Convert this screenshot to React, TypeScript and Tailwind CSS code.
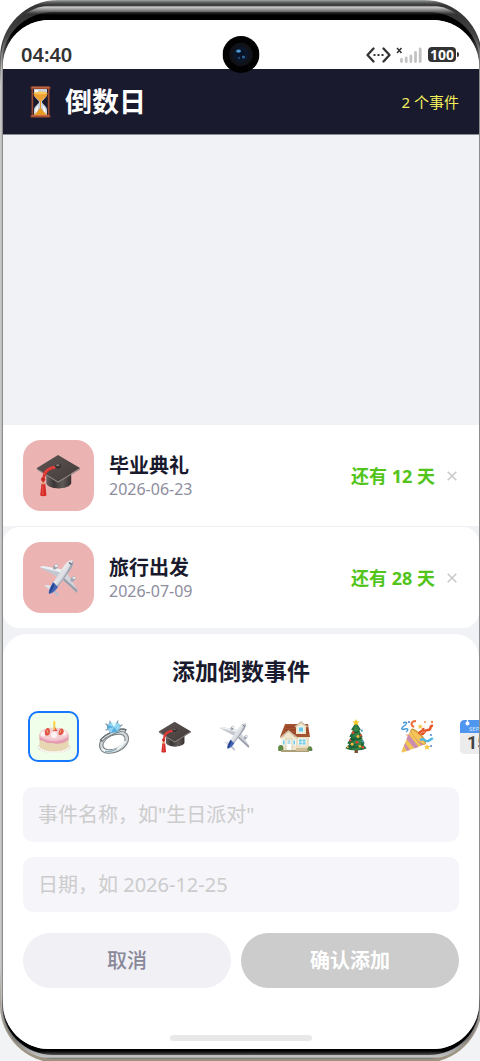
import { useState } from "react";
import type { ReactNode } from "react";

function CapIcon({ className }: { className: string }) {
  return (
    <svg viewBox="0 0 46 44" className={className} aria-hidden="true">
      <defs>
        <linearGradient id="capBase" x1="0" x2="1">
          <stop offset="0" stopColor="#6a6462" />
          <stop offset="0.3" stopColor="#3a3635" />
          <stop offset="0.65" stopColor="#5f5957" />
          <stop offset="1" stopColor="#37302f" />
        </linearGradient>
        <linearGradient id="capTop" x1="0" y1="0" x2="1" y2="1">
          <stop offset="0" stopColor="#5d5553" />
          <stop offset="1" stopColor="#423b3a" />
        </linearGradient>
      </defs>
      <path d="M10.500 17v13c2 7 23 7 25.500 0V17z" fill="url(#capBase)" />
      <path d="M1 14.500 22.500 28 45 14.500v1.300L22.500 29.500 1 16z" fill="#8d8583" />
      <path d="M22.500 1 45 14.300 22.500 28 .5 14.500z" fill="url(#capTop)" />
      <path d="M19 12.500C12 14 7.500 17 7.500 23.500v6M20 14c-7 1.500-11 4-11.500 10" fill="none" stroke="#d9322f" strokeWidth="1.700" />
      <path d="M19 13.200C13 14.500 9 17 8 22" fill="none" stroke="#f08a80" strokeWidth=".6" strokeDasharray="1.500 1" />
      <ellipse cx="22.600" cy="12.300" rx="2.800" ry="2.400" fill="#2d2827" />
      <ellipse cx="22.300" cy="11.500" rx="1.800" ry="1.200" fill="#77706e" />
      <circle cx="7.300" cy="26" r="2.200" fill="#c92722" />
      <path d="M5.500 29h4v2h-4z" fill="#e0a070" />
      <path d="M5.500 31h4l1.200 11.500c-2 1-4.500 1-6.400 0z" fill="#d62b28" />
      <path d="M7 32v10" stroke="#f3645c" strokeWidth=".8" />
    </svg>
  );
}

function PlaneIcon({ className }: { className: string }) {
  return (
    <svg viewBox="0 0 42 40" className={className} aria-hidden="true">
      <defs>
        <linearGradient id="planeBody" x1="0" y1="0" x2="1" y2="1">
          <stop offset="0.3" stopColor="#ffffff" />
          <stop offset="0.55" stopColor="#d3d6dc" />
          <stop offset="0.8" stopColor="#858a96" />
        </linearGradient>
      </defs>
      <path d="M1 9 5 8l20 3.500-5.500 7.500z" fill="#c3c7cf" />
      <path d="M1 9 5 8l20 3.500-2 3z" fill="#eff0f3" />
      <path d="m29 15 10.500 17-.500 3-14-13z" fill="#d2d5dc" />
      <path d="M39.500 32 39 35 25 22l1-2z" fill="#9a9fab" />
      <ellipse cx="17.500" cy="8.800" rx="3.200" ry="2" transform="rotate(-52 17.500 8.800)" fill="#a0a5b0" />
      <ellipse cx="18.300" cy="7.700" rx="1.600" ry="1.200" fill="#eef0f3" />
      <ellipse cx="35" cy="21" rx="3.200" ry="2" transform="rotate(-52 35 21)" fill="#a4a9b5" />
      <ellipse cx="36" cy="19.800" rx="1.500" ry="1.100" fill="#eceef2" />
      <path d="M6 27h4l7 2-4 4z" fill="#dfe2e7" />
      <path d="m16 31 5 5.500-.500 2.500-7-7z" fill="#b9becb" />
      <path d="M34 2c2.300 1 .6 6-1 9L19 30c-2 3-5 5-7 6-2-1-1-4 1-8L26 8c2-3 5-6 8-6z" fill="url(#planeBody)" />
      <path d="M35 3c1 2-.5 5.500-2 8L19 30c-1.500 2.500-3.500 4-5 5l-.5-1c7-7 14-17 18-25 1.500-3 2.500-5 3.500-6z" fill="#a0a5b0" />
      <path d="m15 24 5 5-1.500 2c-2 2.500-5 4.500-7 5-1.500-1-.5-4 1-7z" fill="#4263b4" />
      <path d="M16.500 25c-1 5-3 8-5 11 1-5 1-8 5-11z" fill="#243f8e" />
      <path d="m31 4.500 2.500 2" stroke="#59616f" strokeWidth="1.200" />
      <path d="M25 12 17 23" stroke="#9aa2b3" strokeWidth=".6" strokeDasharray="1 1" />
    </svg>
  );
}

function CakeIcon() {
  return (
    <svg viewBox="0 0 34 34" className="h-[34px] w-[34px]" aria-hidden="true">
      <ellipse cx="17" cy="27.500" rx="16.500" ry="5.500" fill="#dcdad5" />
      <path d="M2.500 16v11c2 6.500 27 6.500 29 0V16z" fill="#e6d6b2" />
      <ellipse cx="17" cy="14.500" rx="14.500" ry="7" fill="#f3cfd3" />
      <path d="M2.500 14c2 8 27 8 29 0v6c-2 0-3 3-6 3s-4 1.500-8 .5-6 .5-9-1.500-4-1-6-2z" fill="#e59bb2" />
      <path d="M3 16c4 6 24 6 28 0" fill="none" stroke="#f5bccb" strokeWidth="1.300" />
      <circle cx="6" cy="14" r="2.500" fill="#fdf3f2" />
      <circle cx="17" cy="15" r="3" fill="#fdf3f2" />
      <circle cx="27" cy="13" r="2.500" fill="#fdf3f2" />
      <path d="M8 14.500c-.5-4 1-6.500 3-6.500s2.500 4 1.500 6-4 2-4.500.5zM21.500 14c0-4 2-6 3.500-5.500s2.500 3 1 5-4 2-4.500.5zM16 11l2-4 2.500 4z" fill="#e05544" />
      <path d="m10 10 1 3M24 10l-1 3" stroke="#f8a082" strokeWidth="1" />
      <path d="M17.300 3.500V10" stroke="#efc64e" strokeWidth="1.800" />
      <path d="M17.300.5c2 2 1.300 4 0 4s-2-2 0-4z" fill="#ffdc38" />
      <path d="M1.500 27c4 7 27 7 31 0" fill="none" stroke="#fffdf8" strokeWidth="2" strokeDasharray="1.800 .7" />
    </svg>
  );
}

function RingIcon() {
  return (
    <svg viewBox="0 0 34 34" className="h-[34px] w-[34px]" aria-hidden="true">
      <ellipse cx="17" cy="22" rx="13.500" ry="8.500" transform="rotate(-25 17 22)" fill="none" stroke="#777e82" strokeWidth="4.500" />
      <ellipse cx="17" cy="22" rx="13.500" ry="8.500" transform="rotate(-25 17 22)" fill="none" stroke="#d0d6d8" strokeWidth="2.500" />
      <path d="M5 29c5 5 17 2 23-8" fill="none" stroke="#f3f8f9" strokeWidth="2" />
      <path d="M8 31.500c4 1 9-1 12-3" fill="none" stroke="#8caab8" strokeWidth="1.500" />
      <path d="M4 21c4-6 9-6 14-9 5-2 8-3 11-1" fill="none" stroke="#666d71" strokeWidth="3.500" />
      <path d="M5 20c4-5 8-5 13-8 4-2 7-2 10-1" fill="none" stroke="#d5dadb" strokeWidth="1.500" />
      <path d="m10 5 4-3 6 0 4 4-3 6-7 1-4-4z" fill="#55addd" />
      <path d="m10 5 7 2 7-1-4-4h-6zM17 7l-3 6-4-4zM17 7l4 5 3-6z" fill="#91d4f4" />
      <path d="m14 2 3 5 3-5z" fill="#e1f8ff" />
      <path d="m9 4 2 2M13 1v2M21 1l-1 2M25 5l-2 1M9 10l2-1M23 11l-2-1" stroke="#84949c" strokeWidth="1.200" strokeLinecap="round" />
    </svg>
  );
}

function HouseIcon() {
  return (
    <svg viewBox="0 0 35 34" className="h-[34px] w-[35px]" aria-hidden="true">
      <path d="M4 14h27v17H4z" fill="#e9dec2" />
      <path d="M7 4h23l2 13H2z" fill="#a45231" />
      <path d="M8 7h21M7 10h23M6 13h25" stroke="#87391f" strokeWidth=".7" />
      <path d="M18 6v8h10V6l-5-4z" fill="#f0e6cd" />
      <path d="M17 7 23 2l6.500 5" fill="none" stroke="#cbbba0" strokeWidth="1.500" />
      <path d="M20.500 7h5v5h-5z" fill="#68c8e8" stroke="#fff" strokeWidth=".7" />
      <path d="M3.500 18v13H18V18l-7.500-7z" fill="#f0e6cd" />
      <path d="m2 18 8.500-7 9 7" fill="none" stroke="#d0c0a5" strokeWidth="1.500" />
      <path d="M8 19h6v12H8z" fill="#fff" stroke="#c3b795" strokeWidth=".7" />
      <path d="M9.500 20h3v4h-3z" fill="#b5dce3" />
      <path d="M4.500 20H7v5H4.500zM15 20h2.500v5H15zM20.500 19h7.500v6h-7.500z" fill="#6fcae4" stroke="#fff" strokeWidth=".8" />
      <path d="M24.200 19v6M20.500 22h7.500" stroke="#fff" strokeWidth=".7" />
      <path d="M.5 31c-1-4 0-6 2.500-6s3 3 2 6zM29 31c0-5 4-6 5-3 1 1 0 3 0 3z" fill="#608849" />
      <path d="M3 30h28v2H3z" fill="#a9a079" />
      <path d="M18 28h11v3H18z" fill="#d0bd94" />
    </svg>
  );
}

function TreeIcon() {
  return (
    <svg viewBox="0 0 24 36" className="h-[35px] w-[24px]" aria-hidden="true">
      <path d="M10.500 29h3.500v6h-3.500z" fill="#79502f" />
      <path d="m12 3 5 8-2 1 4 6-2 1 4 6-2 1 4 4c-6 3-16 3-22 0l4-4-2-1 4-6-2-1 4-6-2-1z" fill="#216a40" />
      <path d="m12 4-3 8 4 1-5 5 6 1-8 7 9-1-8 6 7 1 7-4-4-3 2-5-4-2 1-5z" fill="#388548" />
      <path d="M9 13c3 2 5 1 6-1M6 20c5 2 9 2 12-1M4 28c6 2 12 1 16-2" stroke="#185733" strokeWidth="1.200" fill="none" />
      <path d="m12 0 1.200 2.300 2.600.2-2 1.700.7 2.500-2.500-1.300-2.500 1.300.7-2.500-2-1.700 2.600-.2z" fill="#f5c92e" />
      <g fill="#df4931">
        <circle cx="9" cy="14" r="1.400" />
        <circle cx="17" cy="17" r="1.200" />
        <circle cx="6" cy="22" r="1.200" />
        <circle cx="13" cy="24" r="1.500" />
        <circle cx="19" cy="29" r="1.300" />
      </g>
      <g fill="#f2b63b">
        <circle cx="14" cy="18" r="1.500" />
        <circle cx="8" cy="26" r="1.500" />
        <circle cx="16" cy="28" r="1.300" />
        <circle cx="3.500" cy="29" r="1" />
      </g>
      <circle cx="18" cy="12" r="1.100" fill="#4b9bc6" />
      <circle cx="19" cy="23" r="1.200" fill="#4b9bc6" />
    </svg>
  );
}

function PartyIcon() {
  return (
    <svg viewBox="0 0 34 34" className="h-[34px] w-[34px]" aria-hidden="true">
      <path d="m11 9 15 15L4 32c-2 1-3 0-2-2z" fill="#f1c457" />
      <path d="m8.500 14 10 13-4 1.500L6.500 19zM5 23l5 7-3 1-3-5zM12 9l13 15-4 1.500L10 11z" fill="#cc8cb0" />
      <ellipse cx="18.500" cy="16.500" rx="3.500" ry="10.500" transform="rotate(-44 18.500 16.500)" fill="#d09a3c" />
      <ellipse cx="18" cy="17" rx="2.500" ry="9.500" transform="rotate(-44 18 17)" fill="#f5c35a" />
      <path d="M19 14c1-5 6-2 4-6M21 14c4 1 3-5 7-4 4 0 1-5 5-4" fill="none" stroke="#e45427" strokeWidth="2.500" />
      <path d="M14 7c-4-2-3-6 2-6" fill="none" stroke="#ed7140" strokeWidth="2" />
      <path d="M3 3c4-2 5 0 1 3s-2 4 1 3 4 1 1 3" fill="none" stroke="#479dd7" strokeWidth="1.500" />
      <path d="M20 20c5-3 4 2 8 1 3-1 3-3 5-2" fill="none" stroke="#53b7e3" strokeWidth="2.400" />
      <path d="m20 4 1 1.500 2 .2-1.500 1.300.5 2-2-1-1.500 1 .4-2-1.400-1.300 2-.3zM27 24l1 2 2.500.2-2 1.500.5 2-2-1-2 1 .5-2-1.500-1.500 2-.2z" fill="#f7c847" />
      <g fill="#5286ce">
        <circle cx="9" cy="2" r="1.100" />
        <circle cx="31" cy="15" r="1" />
        <circle cx="31" cy="26" r="1" />
      </g>
      <g fill="#ef8b4c">
        <circle cx="25" cy="2" r="1" />
        <circle cx="32" cy="2" r="1.200" />
        <circle cx="24" cy="12" r="1" />
        <circle cx="7" cy="15" r=".8" />
      </g>
    </svg>
  );
}

function CalendarIcon() {
  return (
    <svg viewBox="0 0 34 34" className="h-[34px] w-[34px]" aria-hidden="true">
      <rect width="34" height="34" rx="4.500" fill="#ececec" />
      <path d="M0 13V4.500A4.500 4.500 0 0 1 4.500 0h25A4.500 4.500 0 0 1 34 4.500V13z" fill="#4f96f0" />
      <circle cx="7.500" cy="3.500" r="2" fill="#fff" />
      <path d="M7.500 0v3" stroke="#fff" strokeWidth="1.200" />
      <text x="9" y="11" fontSize="6" fill="#dcebff">SEP</text>
      <text x="7" y="29" fontSize="18" fontWeight="700" fontFamily="Roboto, sans-serif" fill="#444444">15</text>
    </svg>
  );
}

function HourglassIcon() {
  return (
    <svg viewBox="0 0 21 32" className="h-8 w-[21px]" aria-hidden="true">
      <path d="M1.500 3h1.700v26H1.500zM17.800 3h1.700v26h-1.700z" fill="#9a4a30" />
      <path d="M4 3h13v5c0 4-5 6-5 8s5 4 5 8v5H4v-5c0-4 5-6 5-8S4 12 4 8z" fill="#c9d1dc" />
      <path d="M3.500 7h14c0 4.500-5.500 6-6.500 9h-1C9 13 3.500 11.500 3.500 7z" fill="#eda033" />
      <path d="M4.500 29c0-3 3-3 5.500-7V15h1v7c2 4 5.500 4 5.500 7z" fill="#e69a25" />
      <path d="M5 4h3v2l-3 .5zM5.500 23l3-4-1 6-2 3zM15.500 23l-3-4 1 6 2 3z" fill="#f8fcff" />
      <ellipse cx="10.500" cy="7" rx="6.500" ry="1.500" fill="#f8c55b" />
      <rect x=".5" y=".5" width="20" height="2.500" rx="1" fill="#a34b2d" />
      <rect x=".5" y="29" width="20" height="2.500" rx="1" fill="#a34b2d" />
      <path d="M2 1.200h17M2 29.700h17" stroke="#d47a50" strokeWidth=".8" />
    </svg>
  );
}

function StatusBar() {
  return (
    <div className="relative flex h-[49px] items-center justify-between bg-white pt-5 pr-[20px] pl-[18px]">
      <span className="text-[20px] leading-[24px] font-semibold text-[#333333]">04:40</span>
      <div className="flex items-center gap-[5px]">
        <svg viewBox="0 0 25 16" className="h-4 w-[25px]" aria-hidden="true">
          <path d="M7.500 1.500 1.500 8l6 6.500M17.500 1.500l6 6.500-6 6.500" fill="none" stroke="#333" strokeWidth="2.300" strokeLinecap="round" strokeLinejoin="round" />
          <path d="M7.500 7h2v2h-2zM11.500 7h2v2h-2zM15.500 7h2v2h-2z" fill="#333" />
        </svg>
        <svg viewBox="0 0 27 16" className="h-4 w-[27px]" aria-hidden="true">
          <path d="m1 1 4.500 5M5.500 1 1 6" stroke="#333" strokeWidth="1.500" />
          <path d="M5.500 12.500v2M10.200 11v3.500M14.900 9v5.500M19.500 5.500v9M24.200 2v12.500" stroke="#c2c2c2" strokeWidth="2.800" strokeLinecap="round" />
        </svg>
        <span className="flex items-center gap-px">
          <span className="flex h-[15px] w-[28px] items-center justify-center rounded-[4px] bg-[#333333] text-[14px] leading-[15px] font-bold text-white">100</span>
          <span className="h-[5px] w-[2px] rounded-r-sm bg-[#333333]" />
        </span>
      </div>
      <svg viewBox="0 0 38 38" className="absolute top-[16px] left-1/2 z-10 h-[37px] w-[37px] -translate-x-1/2" aria-hidden="true">
        <circle cx="19" cy="19" r="19" fill="#020203" />
        <circle cx="19" cy="19" r="12" fill="#101218" />
        <circle cx="19" cy="19" r="8.500" fill="#0b1728" />
        <circle cx="19" cy="19" r="4.500" fill="#071325" />
        <ellipse cx="16.500" cy="15.500" rx="2.500" ry="1.600" fill="#4c99d3" />
        <circle cx="21.500" cy="21.500" r="1.600" fill="#2d679f" />
        <circle cx="17" cy="22.500" r="1.200" fill="#204875" />
      </svg>
    </div>
  );
}

function EventRow({ name, date, days, icon, shape }: { name: string; date: string; days: number; icon: ReactNode; shape: string }) {
  return (
    <li className={"flex items-center bg-white px-5 py-[15px] " + shape}>
      <span className="flex h-[71px] w-[71px] shrink-0 items-center justify-center rounded-[18px] bg-[#ecb3b3]">{icon}</span>
      <div className="ml-[15px] flex-1">
        <h2 className="text-[20px] leading-[26px] font-bold text-[#1a1a2e]">{name}</h2>
        <p className="text-[16px] leading-[20px] text-[#8d8d9d]">{date}</p>
      </div>
      <p className="text-[18px] leading-[24px] font-bold whitespace-nowrap text-[#52c41a]">还有 {days} 天</p>
      <button type="button" aria-label={"删除 " + name} className="ml-[10px] flex h-6 w-[14px] items-center justify-center">
        <svg viewBox="0 0 10 10" className="h-[10px] w-[10px]" aria-hidden="true">
          <path d="m.7.7 8.600 8.600M9.300.7.7 9.300" stroke="#c8c8c8" strokeWidth="1.500" />
        </svg>
      </button>
    </li>
  );
}

const choices: { label: string; icon: ReactNode }[] = [
  { label: "生日", icon: <CakeIcon /> },
  { label: "婚礼", icon: <RingIcon /> },
  { label: "毕业", icon: <CapIcon className="h-[32px] w-[34px]" /> },
  { label: "旅行", icon: <PlaneIcon className="h-[31px] w-[32px]" /> },
  { label: "搬家", icon: <HouseIcon /> },
  { label: "圣诞", icon: <TreeIcon /> },
  { label: "派对", icon: <PartyIcon /> },
  { label: "日历", icon: <CalendarIcon /> },
];

function AddSheet() {
  const [selected, setSelected] = useState("生日");
  const [name, setName] = useState("");
  const [date, setDate] = useState("");
  const field = "h-[55px] w-full rounded-[10px] bg-[#f5f5fa] px-[15px] text-[20px] leading-[28px] text-[#1a1a2e] outline-none placeholder:text-[#cccccc]";
  return (
    <form className="mt-[6px] rounded-t-[24px] bg-white px-5 pt-[22px] pb-2" onSubmit={(e) => e.preventDefault()}>
      <h2 className="text-center text-[23px] leading-[30px] font-bold text-[#1a1a2e]">添加倒数事件</h2>
      <div className="-mr-5 mt-[25px] overflow-hidden pl-[5px]">
        <div className="flex w-[475px] justify-between">
          {choices.map((c) => (
            <button
              key={c.label}
              type="button"
              aria-label={c.label}
              aria-pressed={selected === c.label}
              onClick={() => setSelected(c.label)}
              className={
                "flex h-[51px] w-[51px] shrink-0 items-center justify-center rounded-[10px] border-2 " +
                (selected === c.label ? "border-[#1677ff] bg-[#f0ffe9]" : "border-transparent")
              }
            >
              {c.icon}
            </button>
          ))}
        </div>
      </div>
      <div className="mt-[25px] flex flex-col gap-[15px]">
        <input aria-label="事件名称" className={field} placeholder={'事件名称，如"生日派对"'} value={name} onChange={(e) => setName(e.target.value)} />
        <input aria-label="日期" className={field} placeholder="日期，如 2026-12-25" value={date} onChange={(e) => setDate(e.target.value)} />
      </div>
      <div className="mt-[21px] flex gap-[10px]">
        <button type="button" className="h-[55px] flex-[208] rounded-full bg-[#f0f0f5] text-[20px] leading-[28px] font-medium text-[#888899]">取消</button>
        <button type="submit" className="h-[55px] flex-[218] rounded-full bg-[#cccccc] text-[20px] leading-[28px] font-bold text-white">确认添加</button>
      </div>
      <div className="mx-auto mt-[47px] h-[6px] w-[142px] rounded-full bg-[#e8e8e8]" />
    </form>
  );
}

export default function App() {
  return (
    <div className="flex min-h-screen overflow-hidden bg-[linear-gradient(#ffffff_50%,#f1f3f5_50%)] font-['Noto_Sans','Noto_Sans_CJK_SC',sans-serif]">
      <div className="-mr-[2px] -mb-[2px] flex min-w-0 flex-1 rounded-[58px] bg-[linear-gradient(#a5aaa5_0,#666866_2px,#343534_5px,#444444_50px,#c9c9c9_85px,#c9c9c9_calc(100%-100px),#a39b8b_calc(100%-55px),#9b927f_100%)] px-px pt-[5px] pb-[4px]">
        <div className="flex min-w-0 flex-1 rounded-[54px] bg-[linear-gradient(#111111_0,#cccccc_2px,#8b8b8b_5px,#333333_9px,#444444_30px,#bcbcbc_65px,#bcbcbc_calc(100%-60px),#777777_calc(100%-20px),#c4c4c4_calc(100%-2px),#666666_100%)] px-px pt-[7px] pb-[4px]">
          <div className="flex min-w-0 flex-1 rounded-[51px] bg-[linear-gradient(#333333_0,#000000_3px,#000000_22px,#8c8c8c_55px,#8c8c8c_calc(100%-60px),#000000_calc(100%-25px),#000000_calc(100%-4px),#555555_100%)] pt-[8px] pr-px pb-[6px] pl-px">
            <main className="flex min-w-0 flex-1 flex-col overflow-hidden rounded-[46px] bg-[#f1f2f5]">
              <StatusBar />
              <header className="flex h-[66px] items-center justify-between border-b border-[#8d8d98] bg-[#1a1a2e] pr-5 pl-[27px]">
                <h1 className="flex items-center gap-[14px] text-[27px] leading-[36px] font-bold text-white">
                  <HourglassIcon />
                  倒数日
                </h1>
                <span className="text-[15px] leading-[20px] text-[#f4f05c]">2 个事件</span>
              </header>
              <ul className="flex flex-1 flex-col justify-end gap-px">
                <EventRow name="毕业典礼" date="2026-06-23" days={12} icon={<CapIcon className="h-[43px] w-[45px]" />} shape="" />
                <EventRow name="旅行出发" date="2026-07-09" days={28} icon={<PlaneIcon className="h-[40px] w-[42px]" />} shape="rounded-[16px]" />
              </ul>
              <AddSheet />
            </main>
          </div>
        </div>
      </div>
    </div>
  );
}
